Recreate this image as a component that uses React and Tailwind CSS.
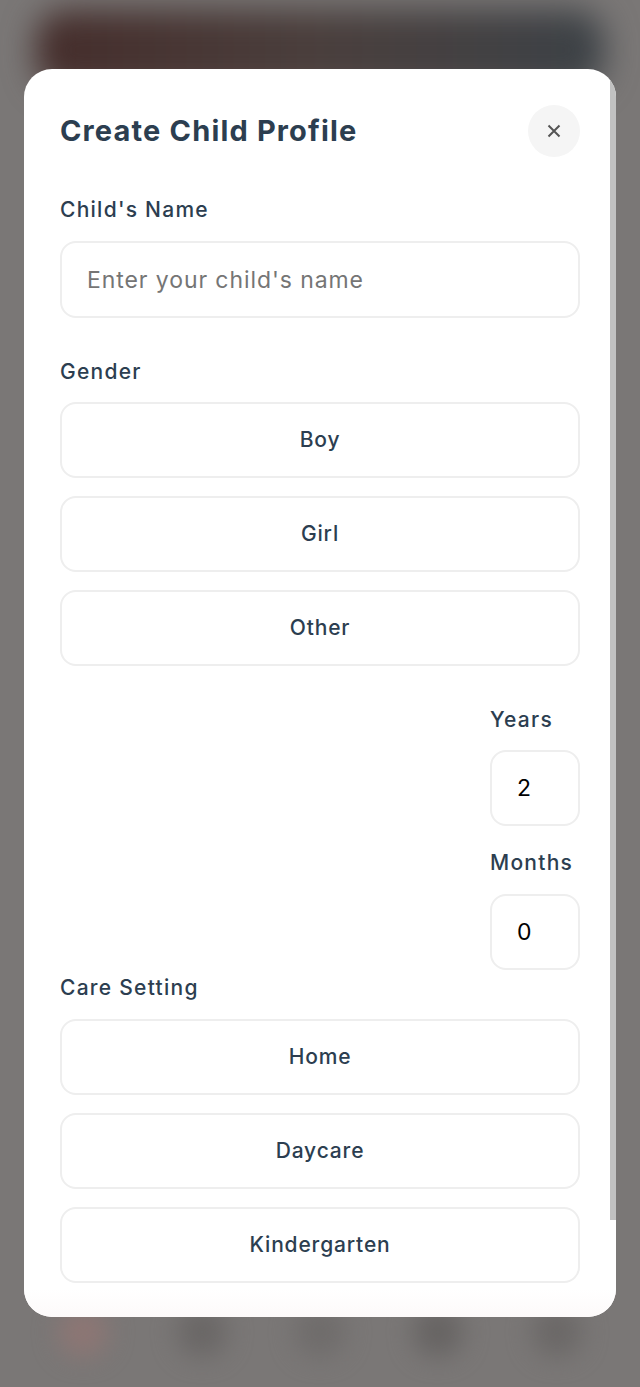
import React, { useState } from "react";

const genders = ["Boy", "Girl", "Other"];
const careSettings = ["Home", "Daycare", "Kindergarten"];

const OptionButton = ({ label, selected, onClick }) => (
  <button
    type="button"
    onClick={onClick}
    className={`h-[76px] w-full rounded-2xl border-2 bg-white text-[21px] font-medium tracking-[0.04em] text-[#2c3e50] ${
      selected ? "border-[#ff8a80]" : "border-[#eeeeee]"
    }`}
  >
    {label}
  </button>
);

const App = () => {
  const [name, setName] = useState("");
  const [gender, setGender] = useState(null);
  const [years, setYears] = useState(2);
  const [months, setMonths] = useState(0);
  const [care, setCare] = useState(null);

  return (
    <div className="relative h-[1387px] w-full overflow-hidden bg-[#7a7776] font-['Inter',sans-serif]">
      {/* page behind the dialog, blurred */}
      <div className="flex h-full flex-col">
        <div className="mx-[36px] mt-[10px] h-[80px] rounded-[30px] bg-gradient-to-r from-[#452d2b] via-[#4a3f3d] to-[#3c4247] blur-lg"></div>
        <div className="flex-1"></div>
        <div className="mb-[30px] flex justify-around px-6">
          {["bg-[#8d7674]", "bg-[#6a6766]", "bg-[#6f6c6b]", "bg-[#676463]", "bg-[#6b6867]"].map((c, i) => (
            <div key={i} className={`h-[50px] w-[50px] rounded-full ${c} blur-md`}></div>
          ))}
        </div>
      </div>

      {/* dialog */}
      <div className="absolute inset-0 flex items-start justify-center pt-[69px]">
        <div className="relative h-[1248px] w-[592px] overflow-hidden rounded-[28px] bg-white px-9 pt-9">
          {/* scroll thumb */}
          <div className="absolute right-0 top-0 h-[1151px] w-[6px] bg-[#c1c1c1]"></div>
          <div className="absolute inset-x-0 bottom-0 h-[28px] bg-gradient-to-b from-white to-[#fdfafa]"></div>

          <div className="mb-[38px] flex items-center justify-between">
            <h2 className="text-[29px] font-bold tracking-[0.04em] text-[#2c3e50]">Create Child Profile</h2>
            <button
              type="button"
              className="flex h-[52px] w-[52px] items-center justify-center rounded-full bg-[#f5f5f5]"
            >
              <svg width="14" height="14" viewBox="0 0 14 14" fill="none" stroke="#555" strokeWidth="2">
                <path d="M1.5 1.5l11 11M12.5 1.5l-11 11" />
              </svg>
            </button>
          </div>

          {/* name */}
          <div className="mb-[39px]">
            <label className="mb-4 block text-[21px] font-medium leading-[30px] tracking-[0.06em] text-[#2c3e50]">
              Child's Name
            </label>
            <input
              type="text"
              value={name}
              onChange={(e) => setName(e.target.value)}
              placeholder="Enter your child's name"
              className="h-[77px] w-full rounded-2xl border-2 border-[#eeeeee] pl-[25px] text-[23px] tracking-[0.04em] text-black outline-none placeholder:text-[#757575]"
            />
          </div>

          {/* gender */}
          <div className="mb-[39px]">
            <label className="mb-[15px] block text-[21px] font-medium leading-[30px] tracking-[0.06em] text-[#2c3e50]">
              Gender
            </label>
            <div className="flex flex-col gap-[18px]">
              {genders.map((g) => (
                <OptionButton key={g} label={g} selected={gender === g} onClick={() => setGender(g)} />
              ))}
            </div>
          </div>

          {/* age */}
          <div className="mb-[3px] flex justify-end">
            <div className="w-[90px]">
              <label className="mb-[15px] block text-[21px] font-medium leading-[30px] tracking-[0.06em] text-[#2c3e50]">
                Years
              </label>
              <input
                type="text"
                value={years}
                onChange={(e) => setYears(e.target.value)}
                className="mb-[22px] h-[76px] w-full rounded-2xl border-2 border-[#eeeeee] pl-[25px] text-[23px] text-black outline-none"
              />
              <label className="mb-4 block whitespace-nowrap text-[21px] font-medium leading-[30px] tracking-[0.06em] text-[#2c3e50]">
                Months
              </label>
              <input
                type="text"
                value={months}
                onChange={(e) => setMonths(e.target.value)}
                className="h-[76px] w-full rounded-2xl border-2 border-[#eeeeee] pl-[25px] text-[23px] text-black outline-none"
              />
            </div>
          </div>

          {/* care setting */}
          <div>
            <label className="mb-4 block text-[21px] font-medium leading-[30px] tracking-[0.06em] text-[#2c3e50]">
              Care Setting
            </label>
            <div className="flex flex-col gap-[18px]">
              {careSettings.map((c) => (
                <OptionButton key={c} label={c} selected={care === c} onClick={() => setCare(c)} />
              ))}
            </div>
          </div>
        </div>
      </div>
    </div>
  );
};

export default App;
